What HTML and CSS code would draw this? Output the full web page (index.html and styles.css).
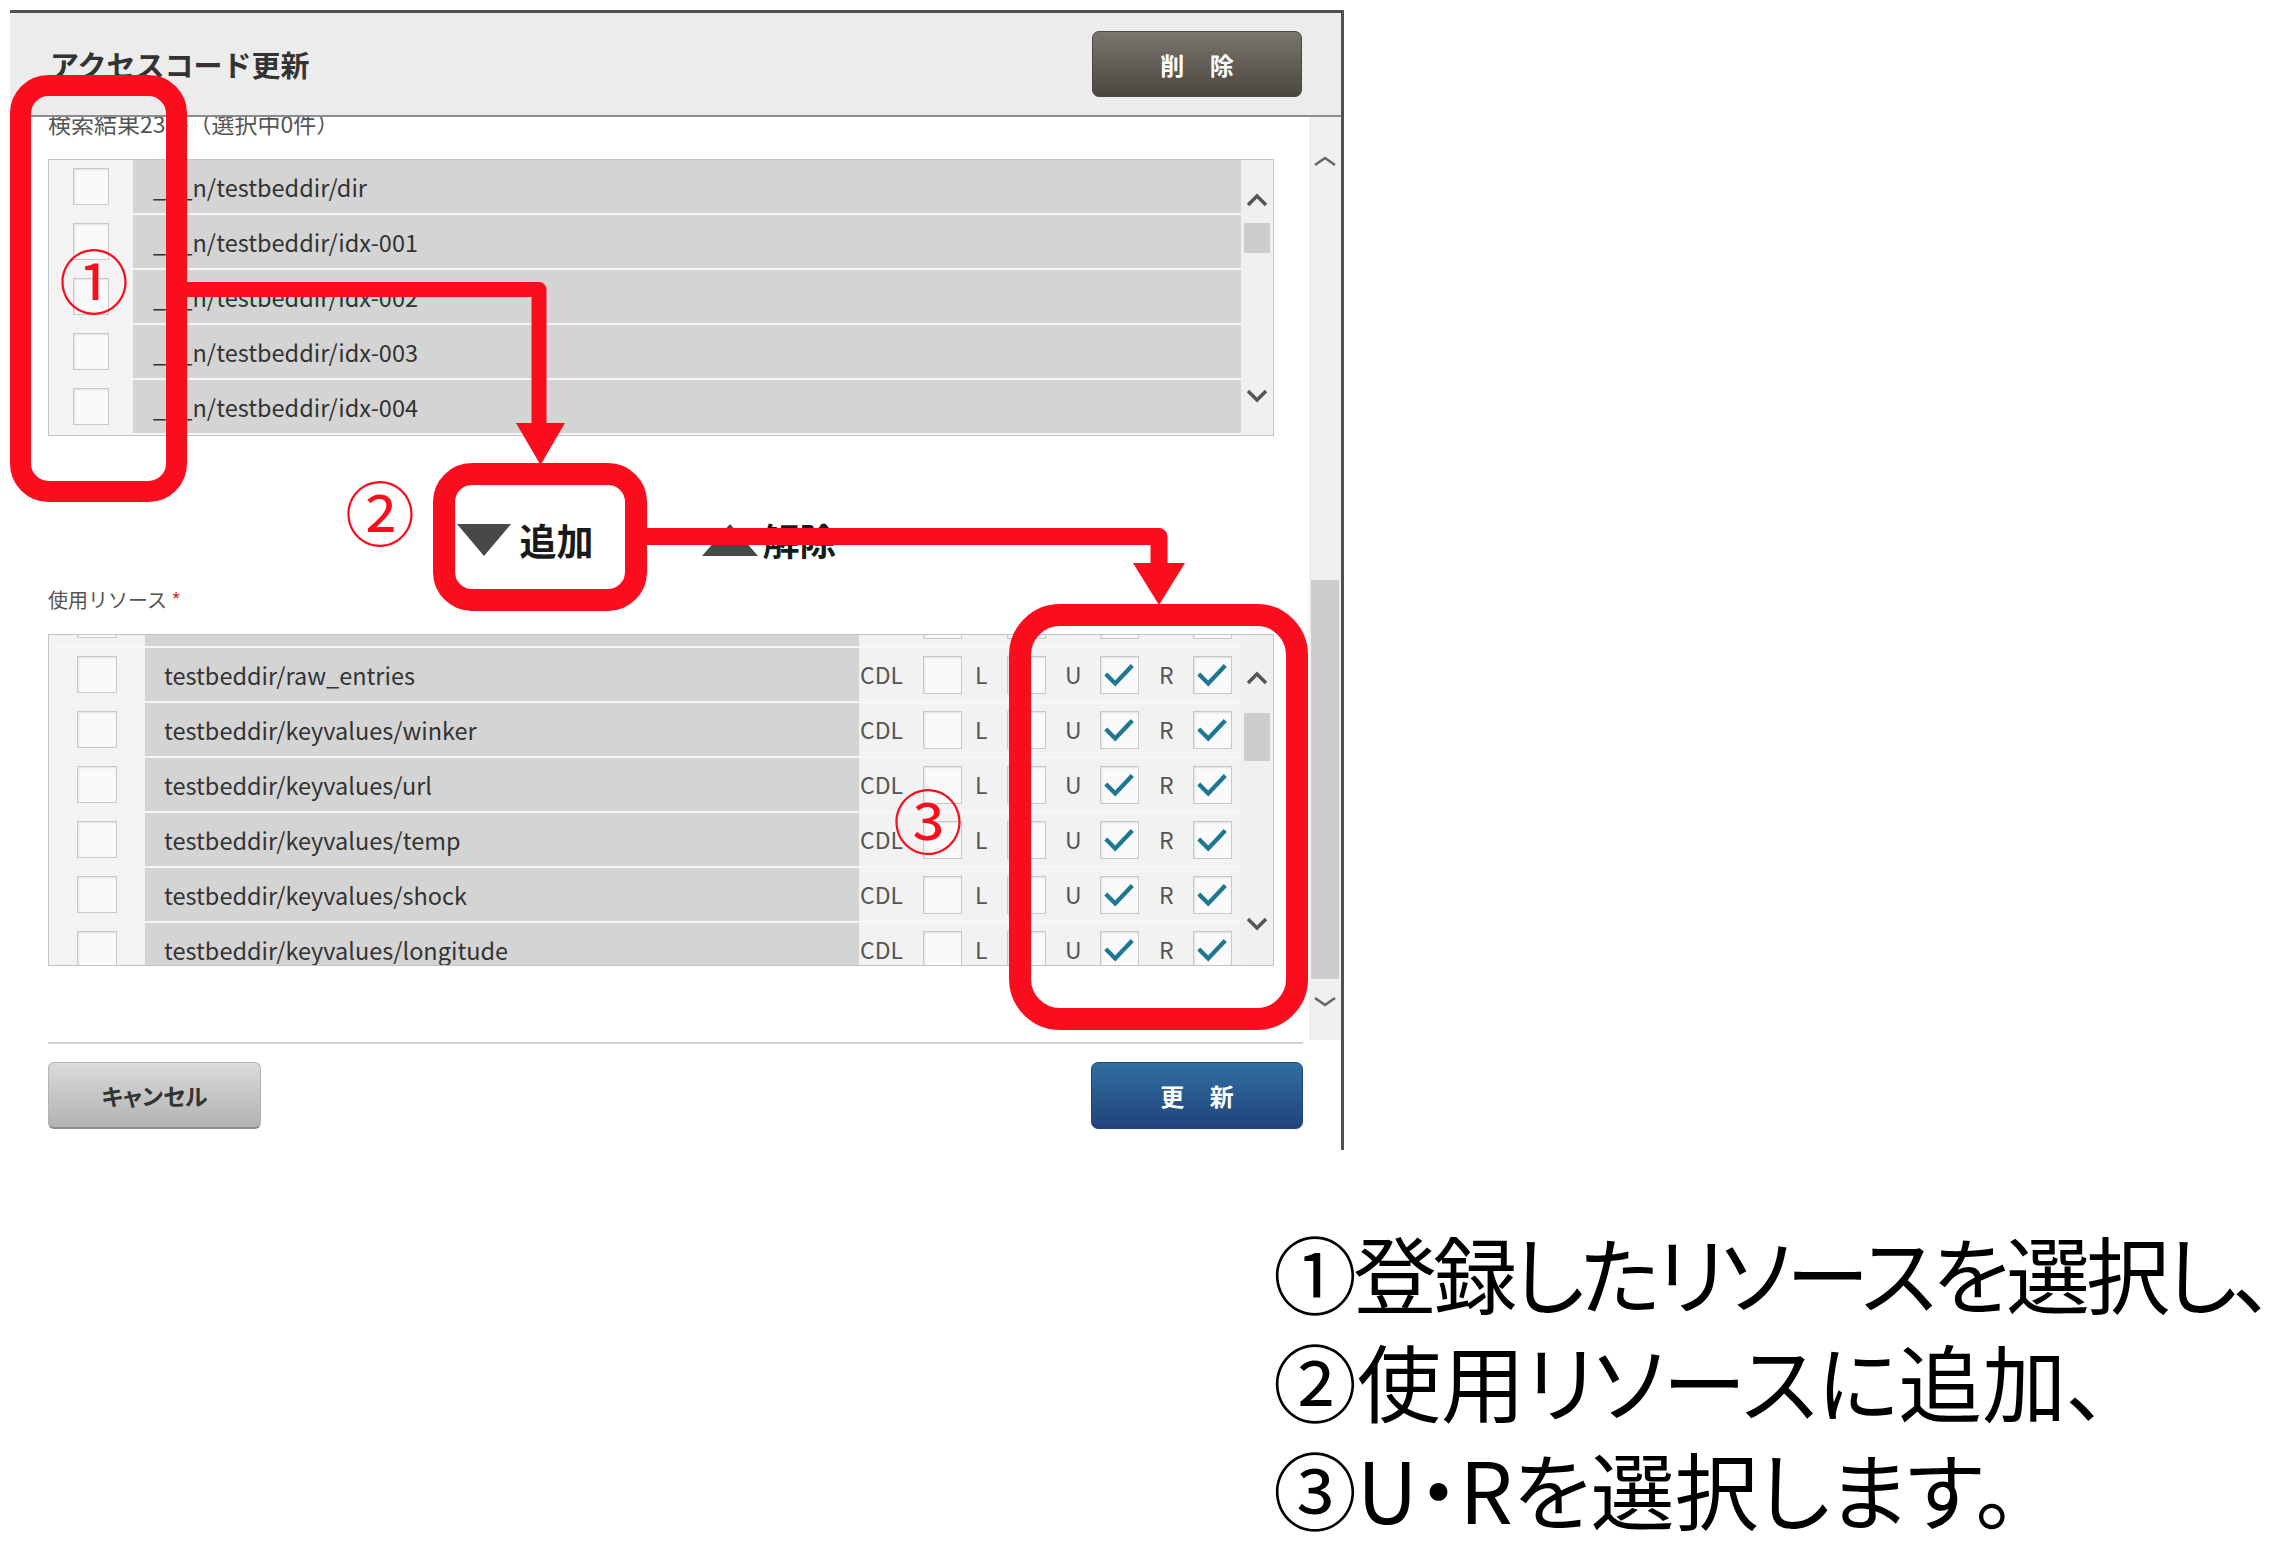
FILE: index.html
```html
<!DOCTYPE html>
<html lang="ja">
<head>
<meta charset="utf-8">
<title>アクセスコード更新</title>
<link rel="stylesheet" href="styles.css">
</head>
<body>
<div class="page">
  <div class="dialog">
    <div class="dlg-header">
      <h1 class="dlg-title">アクセスコード更新</h1>
      <button class="btn btn-dark">削 除</button>
    </div>
    <div class="dlg-body">
      <div class="dlg-scroll">
        <div class="dlg-content">
          <div class="result-label">検索結果23件（選択中0件）</div>
          <div class="list list-search">
            <div class="list-rows">
              <div class="row"><div class="cell-check cc-s"><span class="cb"></span></div><div class="cell-name">___n/testbeddir/dir</div></div>
              <div class="row"><div class="cell-check cc-s"><span class="cb"></span></div><div class="cell-name">___n/testbeddir/idx-001</div></div>
              <div class="row"><div class="cell-check cc-s"><span class="cb"></span></div><div class="cell-name">___n/testbeddir/idx-002</div></div>
              <div class="row"><div class="cell-check cc-s"><span class="cb"></span></div><div class="cell-name">___n/testbeddir/idx-003</div></div>
              <div class="row"><div class="cell-check cc-s"><span class="cb"></span></div><div class="cell-name">___n/testbeddir/idx-004</div></div>
            </div>
            <div class="vscroll vs-search">
              <svg class="chev" width="22" height="14" viewBox="0 0 22 14"><path d="M2 12 L11 3 L20 12" /></svg>
              <div class="thumb"></div>
              <svg class="chev chev-down" width="22" height="14" viewBox="0 0 22 14"><path d="M2 2 L11 11 L20 2" /></svg>
            </div>
          </div>

          <div class="move-actions">
            <span class="move"><svg class="tri" width="54" height="32" viewBox="0 0 54 32"><path d="M0 0 H54 L27 32 Z"/></svg>追加</span>
            <span class="move move-rm"><svg class="tri" width="56" height="32" viewBox="0 0 56 32"><path d="M28 0 L56 32 H0 Z"/></svg>解除</span>
          </div>

          <div class="field-label">使用リソース <span class="req">*</span></div>

          <div class="list list-used">
            <div class="list-rows">
              <div class="rows-inner">
                <div class="row"><div class="cell-check cc-u"><span class="cb cb-u"></span></div><div class="cell-name"></div>
                  <div class="cell-perm"><span class="pl"></span><span class="cb cb-p"></span><span class="pl"></span><span class="cb cb-p"></span><span class="pl"></span><span class="cb cb-p"></span><span class="pl"></span><span class="cb cb-p"></span></div></div>
                <div class="row"><div class="cell-check cc-u"><span class="cb cb-u"></span></div><div class="cell-name">testbeddir/raw_entries</div>
                  <div class="cell-perm"><span class="pl pl-cdl">CDL</span><span class="cb cb-p"></span><span class="pl pl-l">L</span><span class="cb cb-p"></span><span class="pl pl-u">U</span><span class="cb cb-p on"><svg viewBox="0 0 39 38"><path d="M5 18 L15 28 L33 9"/></svg></span><span class="pl pl-r">R</span><span class="cb cb-p on"><svg viewBox="0 0 39 38"><path d="M5 18 L15 28 L33 9"/></svg></span></div></div>
                <div class="row"><div class="cell-check cc-u"><span class="cb cb-u"></span></div><div class="cell-name">testbeddir/keyvalues/winker</div>
                  <div class="cell-perm"><span class="pl pl-cdl">CDL</span><span class="cb cb-p"></span><span class="pl pl-l">L</span><span class="cb cb-p"></span><span class="pl pl-u">U</span><span class="cb cb-p on"><svg viewBox="0 0 39 38"><path d="M5 18 L15 28 L33 9"/></svg></span><span class="pl pl-r">R</span><span class="cb cb-p on"><svg viewBox="0 0 39 38"><path d="M5 18 L15 28 L33 9"/></svg></span></div></div>
                <div class="row"><div class="cell-check cc-u"><span class="cb cb-u"></span></div><div class="cell-name">testbeddir/keyvalues/url</div>
                  <div class="cell-perm"><span class="pl pl-cdl">CDL</span><span class="cb cb-p"></span><span class="pl pl-l">L</span><span class="cb cb-p"></span><span class="pl pl-u">U</span><span class="cb cb-p on"><svg viewBox="0 0 39 38"><path d="M5 18 L15 28 L33 9"/></svg></span><span class="pl pl-r">R</span><span class="cb cb-p on"><svg viewBox="0 0 39 38"><path d="M5 18 L15 28 L33 9"/></svg></span></div></div>
                <div class="row"><div class="cell-check cc-u"><span class="cb cb-u"></span></div><div class="cell-name">testbeddir/keyvalues/temp</div>
                  <div class="cell-perm"><span class="pl pl-cdl">CDL</span><span class="cb cb-p"></span><span class="pl pl-l">L</span><span class="cb cb-p"></span><span class="pl pl-u">U</span><span class="cb cb-p on"><svg viewBox="0 0 39 38"><path d="M5 18 L15 28 L33 9"/></svg></span><span class="pl pl-r">R</span><span class="cb cb-p on"><svg viewBox="0 0 39 38"><path d="M5 18 L15 28 L33 9"/></svg></span></div></div>
                <div class="row"><div class="cell-check cc-u"><span class="cb cb-u"></span></div><div class="cell-name">testbeddir/keyvalues/shock</div>
                  <div class="cell-perm"><span class="pl pl-cdl">CDL</span><span class="cb cb-p"></span><span class="pl pl-l">L</span><span class="cb cb-p"></span><span class="pl pl-u">U</span><span class="cb cb-p on"><svg viewBox="0 0 39 38"><path d="M5 18 L15 28 L33 9"/></svg></span><span class="pl pl-r">R</span><span class="cb cb-p on"><svg viewBox="0 0 39 38"><path d="M5 18 L15 28 L33 9"/></svg></span></div></div>
                <div class="row"><div class="cell-check cc-u"><span class="cb cb-u"></span></div><div class="cell-name">testbeddir/keyvalues/longitude</div>
                  <div class="cell-perm"><span class="pl pl-cdl">CDL</span><span class="cb cb-p"></span><span class="pl pl-l">L</span><span class="cb cb-p"></span><span class="pl pl-u">U</span><span class="cb cb-p on"><svg viewBox="0 0 39 38"><path d="M5 18 L15 28 L33 9"/></svg></span><span class="pl pl-r">R</span><span class="cb cb-p on"><svg viewBox="0 0 39 38"><path d="M5 18 L15 28 L33 9"/></svg></span></div></div>
              </div>
            </div>
            <div class="vscroll vs-used">
              <svg class="chev" width="22" height="14" viewBox="0 0 22 14"><path d="M2 12 L11 3 L20 12" /></svg>
              <div class="thumb"></div>
              <svg class="chev chev-down" width="22" height="14" viewBox="0 0 22 14"><path d="M2 2 L11 11 L20 2" /></svg>
            </div>
          </div>
        </div>
      </div>
      <div class="vscroll vs-outer">
        <svg class="chev" width="24" height="12" viewBox="0 0 24 12"><path d="M2 10 L12 3 L22 10" /></svg>
        <div class="thumb"></div>
        <svg class="chev" width="24" height="12" viewBox="0 0 24 12"><path d="M2 2 L12 9 L22 2" /></svg>
      </div>
    </div>
    <div class="dlg-footer">
      <div class="footer-bar">
        <button class="btn btn-gray">キャンセル</button>
        <button class="btn btn-blue">更 新</button>
      </div>
    </div>
  </div>

  <p class="caption"><span class="cap-line cap-line-1">①登録したリソースを選択し、</span><span class="cap-line">②使用リソースに追加、</span><span class="cap-line">③U・Rを選択します。</span></p>

  <svg class="annot" width="2288" height="1160" viewBox="0 0 2288 1160">
    <g fill="none" stroke="#fa0e1e" stroke-linejoin="round">
      <rect x="20.5" y="85.5" width="156" height="406" rx="28" stroke-width="21"/>
      <rect x="444" y="474" width="192" height="126" rx="28" stroke-width="22"/>
      <rect x="1020" y="615" width="277" height="404" rx="40" stroke-width="22"/>
      <path d="M180 289.5 H539 V428" stroke-width="15"/>
      <path d="M640 536.5 H1159 V566" stroke-width="17"/>
    </g>
    <g fill="#fa0e1e">
      <polygon points="516,423 565,423 540.5,465"/>
      <polygon points="1133,563 1185,563 1159,605"/>
    </g>
  </svg>
  <span class="num num-1">①</span>
  <span class="num num-2">②</span>
  <span class="num num-3">③</span>
</div>
</body>
</html>
```

FILE: styles.css
```css
* { box-sizing: border-box; }

html, body {
  margin: 0;
  padding: 0;
  background: #ffffff;
}

body {
  font-family: "Noto Sans CJK JP", "Noto Sans", sans-serif;
  color: #333333;
  width: 2288px;
  height: 1542px;
  overflow: hidden;
}

.page {
  position: relative;
  width: 2288px;
  height: 1542px;
  padding: 10px 0 0 10px;
}

/* ---------- dialog ---------- */
.dialog {
  width: 1334px;
  background: #ffffff;
  border-top: 3px solid #505050;
  border-right: 3px solid #505050;
}

.dlg-header {
  height: 104px;
  background: #ececec;
  border-bottom: 2px solid #8c8c8c;
  display: flex;
  align-items: center;
  justify-content: space-between;
  padding: 0 39px 0 40px;
}

.dlg-title {
  margin: 0;
  font-size: 29px;
  font-weight: 700;
  color: #333333;
}

.btn {
  font-family: inherit;
  font-weight: 700;
  font-size: 24px;
  border-radius: 7px;
  padding: 0;
  cursor: pointer;
}

.btn-dark {
  width: 210px;
  height: 66px;
  color: #ffffff;
  background: linear-gradient(#7a756f, #4c4640);
  border: 1px solid #4a4540;
  letter-spacing: 10px;
  padding-left: 10px;
}

.btn-gray {
  width: 213px;
  height: 67px;
  color: #333333;
  background: linear-gradient(#dadada, #b2b2b2);
  border: 1px solid #b4b4b4;
  border-bottom: 2px solid #8e8e8e;
  border-radius: 6px;
  font-size: 23px;
  font-feature-settings: "palt";
}

.btn-blue {
  width: 212px;
  height: 67px;
  color: #ffffff;
  background: linear-gradient(#306fa0, #22437c);
  border: 1px solid #23457d;
  letter-spacing: 10px;
  padding-left: 10px;
}

.dlg-body {
  display: flex;
  height: 923px;
}

.dlg-scroll {
  flex: 1;
  overflow: hidden;
}

.dlg-content {
  padding: 0 35px 0 38px;
}

.result-label {
  margin-top: -9px;
  font-size: 23px;
  line-height: 30px;
  color: #555555;
}

/* ---------- lists ---------- */
.list {
  display: flex;
  border: 1px solid #c3c3c3;
}

.list-search {
  margin-top: 21px;
  height: 277px;
}

.list-used {
  margin-top: 20px;
  height: 332px;
}

.list-rows {
  flex: 1;
  overflow: hidden;
}

.rows-inner {
  margin-top: -42px;
}

.row {
  display: flex;
  height: 55px;
  border-bottom: 2px solid #f6f6f6;
}

.cell-check {
  background: #f3f3f3;
  display: flex;
  align-items: center;
  justify-content: center;
}

.cc-s { width: 84px; }
.cc-u { width: 96px; }

.cell-name {
  flex: 1;
  background: #d4d4d4;
  display: flex;
  align-items: center;
  padding-left: 20px;
  font-size: 23.5px;
  color: #333333;
  white-space: nowrap;
}

.list-used .cell-name { padding-left: 19px; }

.cell-perm {
  width: 382px;
  background: #f2f2f2;
  display: grid;
  grid-template-columns: 63px 39px 45px 39px 54px 39px 54px 39px;
  align-items: center;
  padding-left: 1px;
}

.pl {
  font-size: 23px;
  color: #555555;
  line-height: 1;
}

.pl-l { padding-left: 13px; }
.pl-u { padding-left: 19px; }
.pl-r { padding-left: 20px; }

.cb {
  display: block;
  width: 36px;
  height: 37px;
  background: #fafafa;
  border: 1px solid #c8c8c8;
  box-shadow: inset 1px 1px 2px rgba(0, 0, 0, 0.10);
}

.cb-u { width: 40px; height: 37px; }
.cb-p { width: 39px; height: 38px; }

.cb svg {
  display: block;
  width: 100%;
  height: 100%;
}

.cb svg path {
  fill: none;
  stroke: #1c7893;
  stroke-width: 4.5;
}

/* ---------- scrollbars ---------- */
.vscroll {
  width: 32px;
  background: #f0f0f0;
  display: flex;
  flex-direction: column;
  align-items: center;
}

.chev path {
  fill: none;
  stroke: #555555;
  stroke-width: 3.5;
}

.chev-down { margin-top: auto; }

.thumb {
  width: 26px;
  background: #cdcdcd;
}

.vs-search { padding: 33px 0 32px; }
.vs-search .thumb { margin-top: 16px; height: 30px; }

.vs-used { padding: 36px 0 34px; }
.vs-used .thumb { margin-top: 28px; height: 48px; }

.vs-outer { padding-top: 38px; }
.vs-outer .chev path { stroke: #666666; stroke-width: 2.5; }
.vs-outer .thumb { width: 28px; height: 399px; margin: 413px 0 17px; }

/* ---------- add / remove ---------- */
.move-actions {
  margin-top: 79px;
  height: 50px;
  display: flex;
  align-items: center;
  justify-content: center;
  gap: 108px;
  padding-right: 29px;
}

.move {
  display: flex;
  align-items: center;
  gap: 9px;
  font-size: 37px;
  font-weight: 700;
  color: #1a1a1a;
}

.move-rm { gap: 5px; }

.tri path { fill: #484848; }

.field-label {
  margin-top: 21px;
  font-size: 20px;
  line-height: 28px;
  color: #555555;
}

.req { color: #e53030; }

/* ---------- footer ---------- */
.dlg-footer {
  padding: 2px 38px 21px 38px;
}

.footer-bar {
  border-top: 2px solid #d2d2d2;
  padding-top: 18px;
  display: flex;
  justify-content: space-between;
}

/* ---------- caption ---------- */
.caption {
  margin: 68px 0 0 1263px;
  font-size: 84px;
  line-height: 108px;
  color: #000000;
  white-space: nowrap;
  font-feature-settings: "palt";
}

.cap-line { display: block; }
.cap-line-1 { letter-spacing: -4px; }

/* ---------- annotations ---------- */
.annot {
  position: absolute;
  left: 0;
  top: 0;
  pointer-events: none;
}

.num {
  position: absolute;
  width: 70px;
  font-size: 70px;
  line-height: 1;
  text-align: center;
  color: #fa0e1e;
}

.num-1 { left: 59px; top: 244px; }
.num-2 { left: 345px; top: 476px; }
.num-3 { left: 893px; top: 784px; }
```
